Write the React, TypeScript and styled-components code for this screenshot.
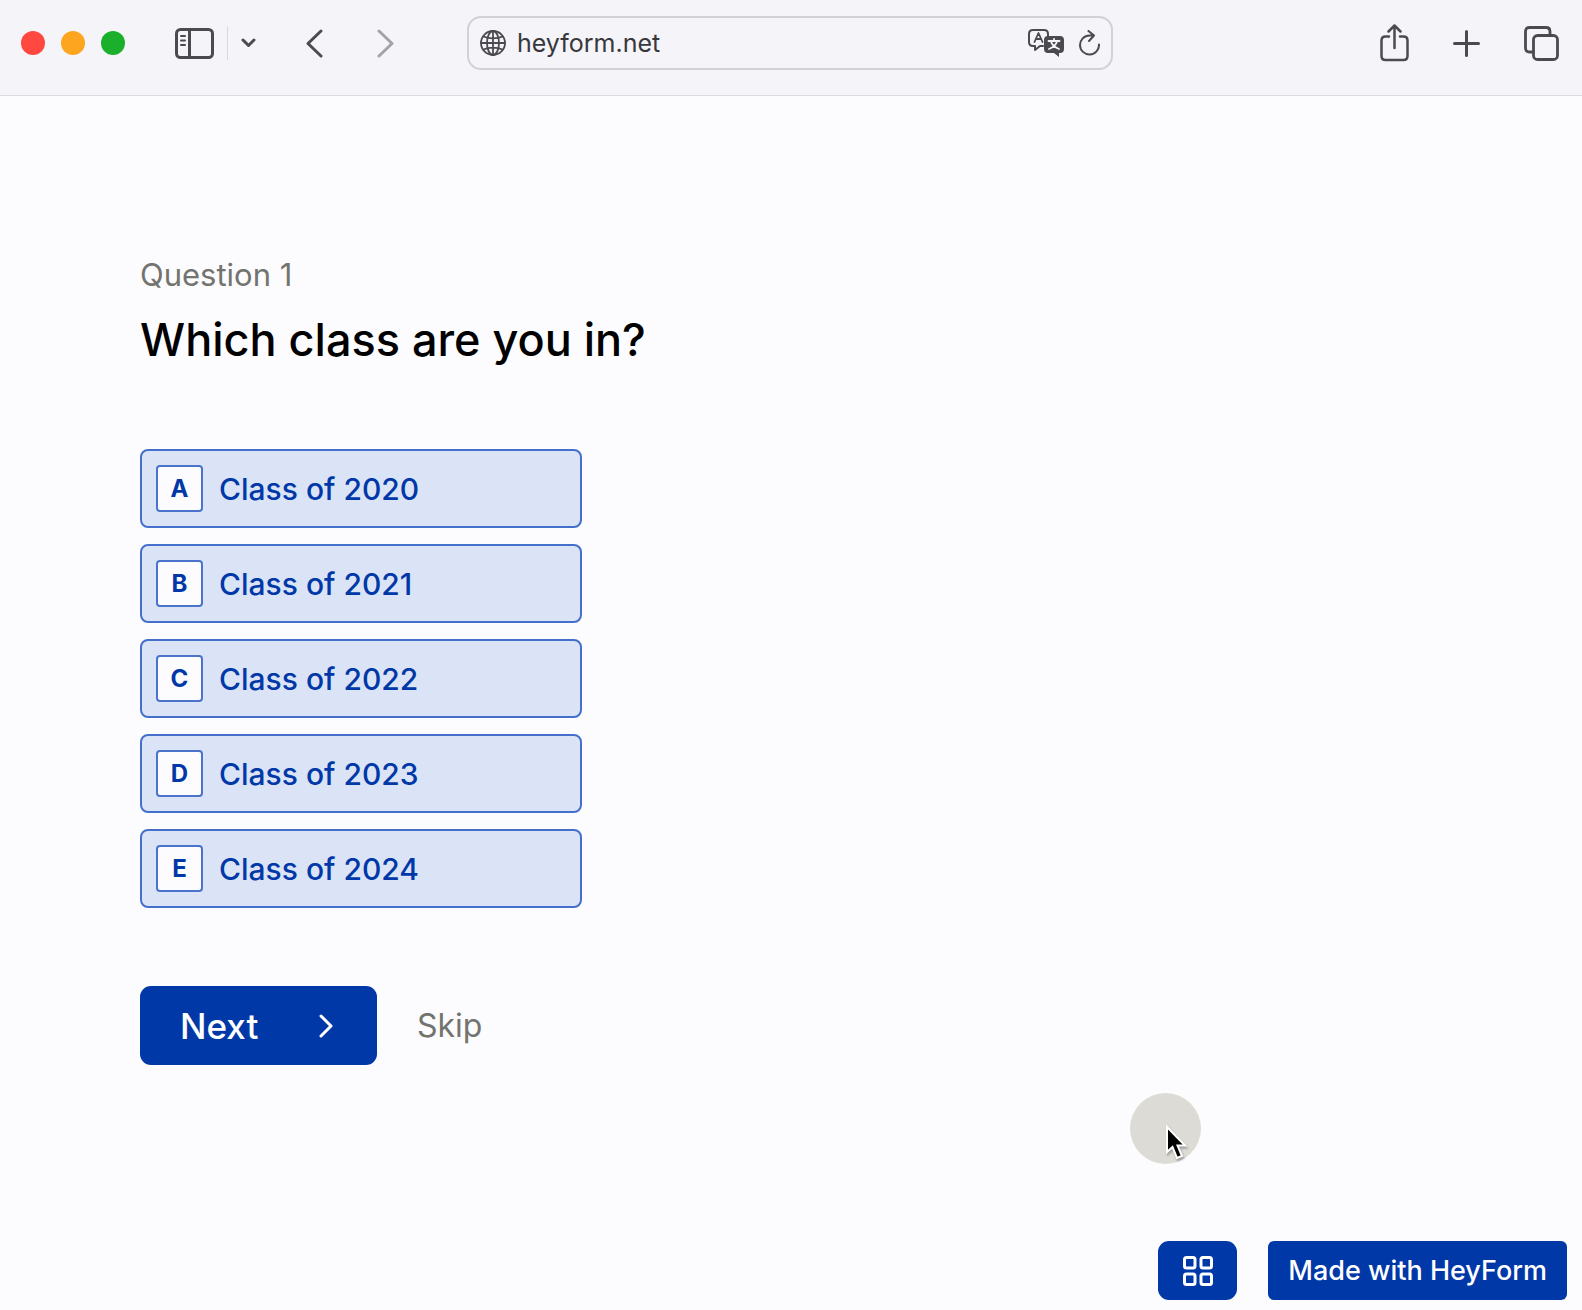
import React, { useState } from "react";
import styled, { createGlobalStyle } from "styled-components";

const blue = "#0138a8";
const ink = "#4a4a50";
const sans = `Inter, "Liberation Sans", sans-serif`;

const GlobalStyle = createGlobalStyle`
  *, *::before, *::after { box-sizing: border-box; }
  body { margin: 0; background: #fcfcfe; font-family: ${sans}; }
  button, input { font: inherit; color: inherit; }
`;

const Page = styled.div`
  position: relative;
  display: flex;
  flex-direction: column;
  min-height: 100vh;
`;

const Toolbar = styled.header`
  display: grid;
  grid-template-columns: 1fr minmax(300px, 646px) 1fr;
  align-items: center;
  padding: 16px 23px 25px 21px;
  background: #f5f4f8;
  border-bottom: 1px solid #dcd9df;
`;

const ToolGroup = styled.div<{ $gap: number; $end?: boolean }>`
  display: flex;
  align-items: center;
  justify-content: ${(p) => (p.$end ? "flex-end" : "flex-start")};
  gap: ${(p) => p.$gap}px;
`;

const IconButton = styled.button<{ $faded?: boolean }>`
  display: flex;
  padding: 0;
  border: 0;
  background: none;
  color: ${(p) => (p.$faded ? "#a3a3a8" : ink)};
  cursor: pointer;
`;

const WindowDot = styled.button<{ $color: string }>`
  width: 24px;
  height: 24px;
  padding: 0;
  border: 0;
  border-radius: 50%;
  background: ${(p) => p.$color};
`;

const Windows = styled(ToolGroup)`
  margin-right: 50px;
`;

const SidebarTools = styled(ToolGroup)`
  margin-right: 50px;
`;

const Divider = styled.span`
  width: 1px;
  height: 34px;
  background: #d9d8dc;
`;

const AddressBar = styled.div`
  display: flex;
  align-items: center;
  gap: 11px;
  height: 54px;
  padding: 0 11px;
  border: 2px solid #d2d1d4;
  border-radius: 14px;
  color: ${ink};
`;

const Address = styled.input`
  flex: 1;
  min-width: 0;
  height: 40px;
  padding: 0;
  border: 0;
  outline: 0;
  background: none;
  color: #38383c;
  font-size: 25px;
`;

const Main = styled.main`
  padding: 159px 140px 0;
`;

const Step = styled.p`
  margin: 0;
  color: #73736f;
  font-size: 31px;
  line-height: 40px;
`;

const Title = styled.h1`
  margin: 12px 0 0;
  color: #000;
  font-size: 45px;
  font-weight: 500;
  line-height: 66px;
`;

const Options = styled.fieldset`
  display: flex;
  flex-direction: column;
  gap: 16px;
  max-width: 442px;
  margin: 76px 0 0;
  padding: 0;
  border: 0;
`;

const HiddenRadio = styled.input`
  position: absolute;
  opacity: 0;
  pointer-events: none;
`;

const Option = styled.label`
  display: flex;
  align-items: center;
  gap: 16px;
  height: 79px;
  padding: 0 14px;
  border: 2px solid #4470cb;
  border-radius: 8px;
  background: #dae4f6;
  color: ${blue};
  cursor: pointer;
`;

const Key = styled.span`
  display: flex;
  align-items: center;
  justify-content: center;
  width: 47px;
  height: 47px;
  border: 2px solid #4a74cb;
  border-radius: 4px;
  background: #fcfcfe;
  font-size: 24px;
  font-weight: 700;
`;

const OptionText = styled.span`
  font-size: 30px;
  font-weight: 500;
  line-height: 40px;
`;

const Actions = styled.div`
  display: flex;
  align-items: center;
  gap: 40px;
  margin-top: 78px;
`;

const NextButton = styled.button`
  display: flex;
  align-items: center;
  justify-content: space-between;
  width: 237px;
  height: 79px;
  padding: 0 44px 0 40px;
  border: 0;
  border-radius: 11px;
  background: ${blue};
  color: #fff;
  font-size: 35px;
  font-weight: 500;
  cursor: pointer;
`;

const SkipButton = styled.button`
  padding: 0;
  border: 0;
  background: none;
  color: #73736f;
  font-size: 32px;
  line-height: 40px;
  cursor: pointer;
`;

const Footer = styled.footer`
  display: flex;
  justify-content: flex-end;
  gap: 31px;
  margin-top: auto;
  padding: 40px 15px 10px;
`;

const GridButton = styled.button`
  display: flex;
  align-items: center;
  justify-content: center;
  width: 79px;
  height: 59px;
  padding: 0;
  border: 0;
  border-radius: 11px;
  background: ${blue};
  color: #fff;
`;

const MadeWith = styled.a`
  display: flex;
  align-items: center;
  height: 59px;
  padding: 0 20px;
  border-radius: 6px;
  background: ${blue};
  color: #fff;
  font-size: 27px;
  font-weight: 500;
  text-decoration: none;
`;

const Pointer = styled.div`
  position: absolute;
  top: 1093px;
  left: 1130px;
  display: flex;
  width: 71px;
  height: 71px;
  border-radius: 50%;
  background: #dcdbd6;
  pointer-events: none;
`;

const stroke = {
  fill: "none",
  stroke: "currentColor",
  strokeLinecap: "round" as const,
  strokeLinejoin: "round" as const,
};

const SidebarIcon = () => (
  <svg width="39" height="31" viewBox="0 0 39 31" {...stroke} strokeWidth="3">
    <rect x="1.5" y="1.5" width="36" height="28" rx="4" />
    <path d="M14.5 2v27" />
    <path d="M6 8h4M6 12.500h4M6 17h4" strokeWidth="2" />
  </svg>
);

const GlobeIcon = () => (
  <svg width="26" height="26" viewBox="0 0 26 26" {...stroke} strokeWidth="1.8">
    <circle cx="13" cy="13" r="12" />
    <ellipse cx="13" cy="13" rx="6" ry="12" />
    <path d="M13 1v24M1 13h24M3.500 6.500c5 2.500 14 2.500 19 0M3.500 19.500c5-2.500 14-2.500 19 0" />
  </svg>
);

const TranslateIcon = () => (
  <svg width="36" height="28" viewBox="0 0 36 28" {...stroke} strokeWidth="2">
    <path d="M15 17H12l-5 4v-4H5q-4 0-4-4V5q0-4 4-4h11q4 0 4 4v2" />
    <path d="M6.500 13L10.500 4l4 9M8 10h5" strokeWidth="1.800" />
    <path
      d="M20 7h12q4 0 4 4v9q0 4-4 4h-1v4l-5-4h-6q-4 0-4-4v-9q0-4 4-4z"
      fill="currentColor"
      stroke="none"
    />
    <path d="M20.500 12h11M26 10v2M29 12.500c-1 3.500-4 6-8 7.500M23 12.500c1 3.500 4 6 8 7.500" stroke="#f6f5f7" strokeWidth="1.800" />
  </svg>
);

const ReloadIcon = () => (
  <svg width="21" height="26" viewBox="0 0 21 26" {...stroke} strokeWidth="2">
    <path d="M20 14.500A9.500 9.500 0 1 1 10.500 5.500H15M9.500 1l5.500 4.500-5 5.500" />
  </svg>
);

const ShareIcon = () => (
  <svg width="29" height="38" viewBox="0 0 29 38" {...stroke} strokeWidth="2.500">
    <path d="M9 12.500H5.500q-4 0-4 4V32q0 4 4 4h18q4 0 4-4V16.500q0-4-4-4H20M14.500 24V2M8.500 7.500l6-6 6 6" />
  </svg>
);

const PlusIcon = () => (
  <svg width="27" height="27" viewBox="0 0 27 27" {...stroke} strokeWidth="3">
    <path d="M13.500 1.500v24M1.500 13.500h24" />
  </svg>
);

const TabsIcon = () => (
  <svg width="35" height="35" viewBox="0 0 35 35" {...stroke} strokeWidth="2.800">
    <rect x="9.500" y="9.500" width="24" height="24" rx="4" />
    <path d="M9 26H5.500q-4 0-4-4V5.500q0-4 4-4H22q4 0 4 4V9" />
  </svg>
);

const GridIcon = () => (
  <svg width="30" height="30" viewBox="0 0 30 30" {...stroke} strokeWidth="3">
    <rect x="1.500" y="1.500" width="10.500" height="10.500" rx="2" />
    <rect x="18" y="1.500" width="10.500" height="10.500" rx="2" />
    <rect x="1.500" y="18" width="10.500" height="10.500" rx="2" />
    <rect x="18" y="18" width="10.500" height="10.500" rx="2" />
  </svg>
);

const ArrowPointer = styled.svg`
  position: absolute;
  top: 32px;
  left: 35px;
  filter: drop-shadow(1px 2px 1px rgba(0, 0, 0, 0.3));
`;

const choices = ["2020", "2021", "2022", "2023", "2024"];

export default function App() {
  const [picked, setPicked] = useState("");
  const [url, setUrl] = useState("heyform.net");

  return (
    <Page>
      <GlobalStyle />
      <Toolbar>
        <ToolGroup $gap={0}>
          <Windows $gap={16}>
            <WindowDot $color="#fe4840" aria-label="Close" />
            <WindowDot $color="#fda51f" aria-label="Minimize" />
            <WindowDot $color="#1bb02c" aria-label="Zoom" />
          </Windows>
          <SidebarTools $gap={13}>
            <IconButton aria-label="Sidebar"><SidebarIcon /></IconButton>
            <Divider />
            <IconButton aria-label="Tab groups">
              <svg width="15" height="10" viewBox="0 0 15 10" {...stroke} strokeWidth="3">
                <path d="M2 2l5.500 5.500L13 2" />
              </svg>
            </IconButton>
          </SidebarTools>
          <ToolGroup $gap={54}>
            <IconButton aria-label="Back">
              <svg width="17" height="29" viewBox="0 0 17 29" {...stroke} strokeWidth="3">
                <path d="M15 2L2 14.500 15 27" />
              </svg>
            </IconButton>
            <IconButton aria-label="Forward" $faded>
              <svg width="17" height="29" viewBox="0 0 17 29" {...stroke} strokeWidth="3">
                <path d="M2 2l13 12.500L2 27" />
              </svg>
            </IconButton>
          </ToolGroup>
        </ToolGroup>
        <AddressBar>
          <GlobeIcon />
          <Address aria-label="Address" value={url} onChange={(e) => setUrl(e.target.value)} />
          <ToolGroup $gap={15}>
            <IconButton aria-label="Translate"><TranslateIcon /></IconButton>
            <IconButton aria-label="Reload"><ReloadIcon /></IconButton>
          </ToolGroup>
        </AddressBar>
        <ToolGroup $gap={44} $end>
          <IconButton aria-label="Share"><ShareIcon /></IconButton>
          <IconButton aria-label="New tab"><PlusIcon /></IconButton>
          <IconButton aria-label="Show tabs"><TabsIcon /></IconButton>
        </ToolGroup>
      </Toolbar>

      <Main>
        <Step>Question 1</Step>
        <Title id="question">Which class are you in?</Title>
        <Options aria-labelledby="question">
          {choices.map((year, i) => (
            <Option key={year} htmlFor={`class-${year}`}>
              <HiddenRadio
                type="radio"
                name="class"
                id={`class-${year}`}
                checked={picked === year}
                onChange={() => setPicked(year)}
              />
              <Key>{"ABCDE"[i]}</Key>
              <OptionText>Class of {year}</OptionText>
            </Option>
          ))}
        </Options>
        <Actions>
          <NextButton>
            Next
            <svg width="14" height="24" viewBox="0 0 14 24" {...stroke} strokeWidth="3">
              <path d="M2 2l10 10L2 22" />
            </svg>
          </NextButton>
          <SkipButton>Skip</SkipButton>
        </Actions>
      </Main>

      <Footer>
        <GridButton aria-label="All questions"><GridIcon /></GridButton>
        <MadeWith href="#">Made with HeyForm</MadeWith>
      </Footer>

      <Pointer>
        <ArrowPointer width="22" height="36" viewBox="0 0 22 36">
          <path
            d="M2 2v25l5.500-5 4.500 11 5-2-4.500-10.500H20z"
            fill="#000"
            stroke="#fff"
            strokeWidth="2"
          />
        </ArrowPointer>
      </Pointer>
    </Page>
  );
}
